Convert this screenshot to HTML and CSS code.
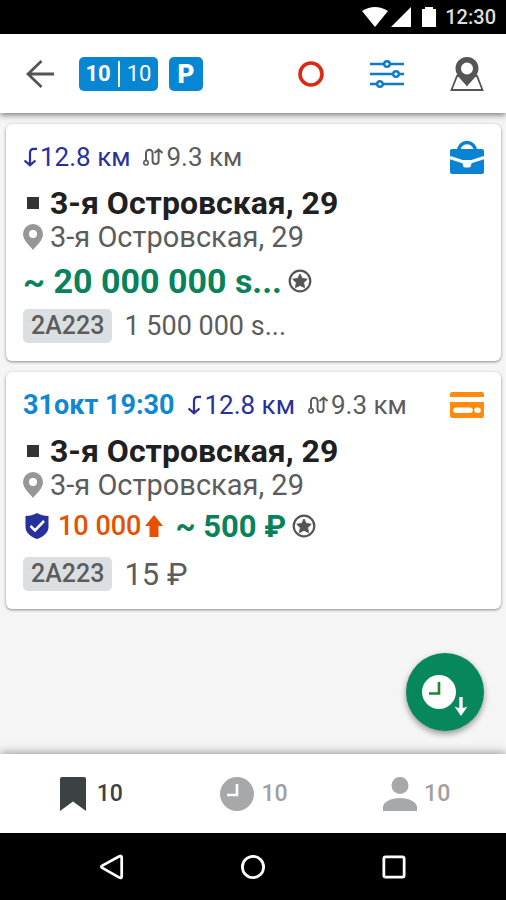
FILE: index.html
```html
<!DOCTYPE html>
<html lang="ru">
<head>
<meta charset="utf-8">
<meta name="viewport" content="width=device-width, initial-scale=1">
<title>Заказы</title>
<link rel="stylesheet" href="styles.css">
</head>
<body>
<svg class="sprite" aria-hidden="true">
  <symbol id="turn" viewBox="0 0 14 20"><path d="M14 1.800H11Q7 1.800 7 6V18M1.500 13.500 7 18.200 12.500 13.500" fill="none" stroke="currentColor" stroke-width="2.200"/></symbol>
  <symbol id="route" viewBox="0 0 20 18"><path d="M3 12.500V5a3.300 3.300 0 0 1 6.600 0V13a3 3 0 0 0 6 0V2M11.500 5 15.600 1.500 19.500 5" fill="none" stroke="currentColor" stroke-width="2"/><circle cx="3" cy="14.800" r="2.200" fill="#fff" stroke="currentColor" stroke-width="1.600"/></symbol>
  <symbol id="pin" viewBox="0 0 20 26"><path fill="currentColor" fill-rule="evenodd" d="M10 0a10 10 0 0 1 10 10c0 6-6 11-10 16C6 21 0 16 0 10A10 10 0 0 1 10 0Zm0 6a4 4 0 1 0 0 8 4 4 0 0 0 0-8Z"/></symbol>
  <symbol id="star" viewBox="0 0 24 24"><circle cx="12" cy="12" r="10.300" fill="none" stroke="currentColor" stroke-width="2.200"/><path fill="currentColor" stroke="currentColor" stroke-linejoin="round" d="m12 5 2.200 4.500 5 .7-3.600 3.500.9 4.900-4.500-2.300-4.500 2.300.9-4.900-3.600-3.500 5-.7Z"/></symbol>
</svg>
<div class="app">
  <div class="status">
    <svg width="26" height="20" viewBox="0 0 26 20" aria-hidden="true"><path fill="#fff" d="M0 4Q13-4 26 4L13 20Z"/></svg>
    <svg class="signal" width="20" height="20" viewBox="0 0 20 20" aria-hidden="true"><path fill="#fff" d="M20 0V20H0Z"/></svg>
    <svg class="battery" width="14" height="20" viewBox="0 0 14 20" aria-hidden="true"><path fill="#fff" d="M3 0h8v2h3v18H0V2h3Z"/></svg>
    <span class="time">12:30</span>
  </div>

  <header class="toolbar">
    <button class="icon-btn" aria-label="Назад"><svg width="28" height="28" viewBox="0 0 28 28"><path d="M28 14H2M15.500 1 2 14l13.500 13" fill="none" stroke="#555" stroke-width="2.800"/></svg></button>
    <button class="badge counts"><b>10</b><span class="bar"></span><span>10</span></button>
    <button class="badge park">P</button>
    <div class="tools">
      <button class="icon-btn" aria-label="Статус"><svg width="26" height="26" viewBox="0 0 26 26"><circle cx="13" cy="13" r="11" fill="none" stroke="#d92a12" stroke-width="3.600"/></svg></button>
      <button class="icon-btn" aria-label="Фильтры"><svg width="34" height="28" viewBox="0 0 34 28"><g fill="#fff" stroke="#1279c8" stroke-width="2.400"><path d="M0 4H34M0 14H34M0 24H34"/><circle cx="17" cy="4" r="2.800"/><circle cx="26" cy="14" r="2.800"/><circle cx="10" cy="24" r="2.800"/></g></svg></button>
      <button class="icon-btn" aria-label="Карта"><svg width="34" height="34" viewBox="0 0 34 34"><path d="M9 19H7L1.500 33H32.500L27 19H25" fill="none" stroke="#555" stroke-width="1.800"/><path fill="#555" fill-rule="evenodd" d="M17 0a11.500 11.500 0 0 1 11.500 11.500c0 7-7 12-11.500 18C12.500 23.500 5.500 18.500 5.500 11.500A11.500 11.500 0 0 1 17 0Zm0 5.500a6 6 0 1 0 0 12 6 6 0 0 0 0-12Z"/></svg></button>
    </div>
  </header>

  <main class="orders">
    <article class="card">
      <div class="row meta">
        <span class="dist near"><svg width="14" height="20"><use href="#turn"/></svg>12.8 км</span>
        <span class="dist"><svg width="20" height="18"><use href="#route"/></svg>9.3 км</span>
        <svg class="kind" width="34" height="34" viewBox="0 0 34 34" aria-hidden="true"><path d="M8.500 11a8.500 8.500 0 0 1 17 0" fill="none" stroke="#0a84d2" stroke-width="3.400"/><rect y="9" width="34" height="25" rx="2" fill="#0a84d2"/><path d="M0 17.500 12 21.500H22L34 17.500" fill="none" stroke="#fff" stroke-width="3.200"/><path fill="#fff" d="M11 20H23L21 25Q21 27.500 19 27.500H15Q13 27.500 13 25Z"/></svg>
      </div>
      <h2 class="row from"><span class="mark"></span>3-я Островская, 29</h2>
      <div class="row to"><svg width="20" height="26"><use href="#pin"/></svg>3-я Островская, 29</div>
      <div class="row pay"><strong class="sum">~ 20 000 000 s...</strong><svg class="star" width="24" height="24"><use href="#star"/></svg></div>
      <div class="row foot"><span class="code">2A223</span><span class="fee">1 500 000 s...</span></div>
    </article>

    <article class="card">
      <div class="row meta">
        <time class="when">31окт 19:30</time>
        <span class="dist near"><svg width="14" height="20"><use href="#turn"/></svg>12.8 км</span>
        <span class="dist"><svg width="20" height="18"><use href="#route"/></svg>9.3 км</span>
        <svg class="kind" width="34" height="26" viewBox="0 0 34 26" aria-hidden="true"><path fill="#ff8a0c" fill-rule="evenodd" d="M2 0H32a2 2 0 0 1 2 2V5H0V2A2 2 0 0 1 2 0ZM0 10H34V24a2 2 0 0 1-2 2H2a2 2 0 0 1-2-2ZM6 15.500a2.500 2.500 0 0 0 0 5.500H20a2.500 2.500 0 0 0 0-5.500ZM27 15.500a2.500 2.500 0 0 0 0 5.500h1a2.500 2.500 0 0 0 0-5.500Z"/></svg>
      </div>
      <h2 class="row from"><span class="mark"></span>3-я Островская, 29</h2>
      <div class="row to"><svg width="20" height="26"><use href="#pin"/></svg>3-я Островская, 29</div>
      <div class="row pay compact">
        <svg class="shield" width="24" height="26" viewBox="0 0 24 26" aria-hidden="true"><path fill="#27309b" d="M12 0q5 3 11.500 3V14c0 6-6 10-11.500 12C6.500 24 .5 20 .5 14V3Q7 3 12 0Z"/><path d="m5.500 13 4.500 4.500L19 8" fill="none" stroke="#fff" stroke-width="2.600"/></svg>
        <span class="bonus">10 000</span>
        <svg class="up" width="18" height="22" viewBox="0 0 18 22" aria-hidden="true"><path fill="#e65100" d="m9 0 9 11h-4.500v11h-9V11H0Z"/></svg>
        <strong class="sum small">~ 500 ₽</strong><svg class="star" width="24" height="24"><use href="#star"/></svg>
      </div>
      <div class="row foot"><span class="code">2A223</span><span class="fee large">15 ₽</span></div>
    </article>

    <button class="fab" aria-label="Предварительные заказы"><svg width="46" height="48" viewBox="0 0 46 48"><circle cx="17" cy="24" r="17" fill="#fff"/><path d="M17 14V25.500H7" fill="none" stroke="#1b8733" stroke-width="2.600"/><path d="M39 29V41" stroke="#fff" stroke-width="3.400"/><path fill="#fff" d="M39 48 32.500 38.500Q39 41.500 45.500 38.500Z"/></svg></button>
  </main>

  <nav class="tabs">
    <a class="tab active" href="#orders"><svg width="26" height="34" viewBox="0 0 26 34"><path fill="#3c4144" d="M2 0H24a2 2 0 0 1 2 2V34L13 24.500 0 34V2A2 2 0 0 1 2 0Z"/></svg>10</a>
    <a class="tab" href="#planned"><svg width="34" height="34" viewBox="0 0 34 34"><circle cx="17" cy="17" r="17" fill="#a6a8a9"/><path d="M17 7V18H7" fill="none" stroke="#fff" stroke-width="2.600"/></svg>10</a>
    <a class="tab" href="#people"><svg width="34" height="34" viewBox="0 0 34 34"><path fill="#a6a8a9" d="M17 0a8.200 8.200 0 0 1 0 17 8.200 8.200 0 0 1 0-17ZM0 34v-4c0-5 8-9 17-9s17 4 17 9v4Z"/></svg>10</a>
  </nav>

  <div class="system">
    <button class="icon-btn" aria-label="Назад"><svg width="24" height="26" viewBox="0 0 26 28"><path d="M2.500 12.500 21 2.300q2.500-1 2.500 1.500V24q0 2.700-2.500 1.500L2.500 15q-2-1.200 0-2.500Z" fill="none" stroke="#fff" stroke-width="3"/></svg></button>
    <button class="icon-btn" aria-label="Домой"><svg width="24" height="24" viewBox="0 0 26 26"><circle cx="13" cy="13" r="11.500" fill="none" stroke="#fff" stroke-width="3"/></svg></button>
    <button class="icon-btn" aria-label="Недавние"><svg width="24" height="24" viewBox="0 0 26 26"><rect x="2" y="2" width="22" height="22" rx="2" fill="none" stroke="#fff" stroke-width="3"/></svg></button>
  </div>
</div>
</body>
</html>
```
FILE: styles.css
```css
* { box-sizing: border-box; }

body {
  margin: 0;
  font-family: Roboto, "Liberation Sans", sans-serif;
  color: #5c5c5c;
}

button {
  border: 0;
  padding: 0;
  margin: 0;
  background: none;
  font: inherit;
}

svg { display: block; flex: none; }
.sprite { position: absolute; width: 0; height: 0; }

.app {
  display: flex;
  flex-direction: column;
  min-height: 100vh;
  background: #f5f5f5;
}

.status {
  display: flex;
  align-items: center;
  justify-content: flex-end;
  height: 34px;
  padding-right: 10px;
  background: #000;
}
.signal { margin-left: 3px; }
.battery { margin-left: 11px; }
.time {
  margin-left: 9px;
  font-size: 20px;
  font-weight: 500;
  color: #ddd;
}

.toolbar {
  position: relative;
  display: flex;
  align-items: center;
  height: 79px;
  padding: 0 22px 0 26px;
  background: #fff;
  box-shadow: 0 2px 6px rgba(0, 0, 0, 0.5);
}
.badge {
  display: flex;
  align-items: center;
  justify-content: center;
  height: 34px;
  border-radius: 5px;
  background: #0786d3;
  color: #fff;
}
.counts {
  gap: 7px;
  width: 79px;
  margin-left: 25px;
  font-size: 22px;
}
.bar { width: 2px; height: 26px; background: #fff; }
.park {
  width: 34px;
  margin-left: 11px;
  font-size: 26px;
  font-weight: 900;
}
.tools {
  display: flex;
  align-items: center;
  gap: 46px;
  margin-left: auto;
}

.orders {
  position: relative;
  flex: 1;
  display: flex;
  flex-direction: column;
  gap: 11px;
  padding: 11px 5px 0 6px;
}
.card {
  padding: 16px 17px 18px;
  border-radius: 6px;
  background: #fff;
  box-shadow: 0 1px 3px rgba(0, 0, 0, 0.45);
}
.row {
  display: flex;
  align-items: center;
  white-space: nowrap;
}
.meta {
  gap: 13px;
  height: 34px;
  font-size: 26px;
}
.dist { display: flex; align-items: center; gap: 3px; }
.near { color: #27309b; }
.when { font-size: 27px; font-weight: 700; color: #0f87d3; }
.kind { margin-left: auto; }

.from {
  height: 36px;
  margin: 11px 0 0;
  font-size: 32px;
  font-weight: 700;
  color: #1e2022;
}
.mark {
  width: 12px;
  height: 12px;
  margin: 0 11px 0 4px;
  background: #333;
}
.to {
  gap: 7px;
  height: 32px;
  font-size: 29px;
}
.to svg { color: #969696; }
.pay { height: 36px; margin-top: 10px; }
.compact { height: 30px; margin-bottom: 16px; }
.sum { font-size: 34px; font-weight: 700; color: #07825a; }
.small { margin-left: 12px; font-size: 31px; }
.star { margin-left: 6px; color: #555; }
.shield { margin: 0 9px 0 2px; }
.bonus { font-size: 27px; font-weight: 500; color: #e65100; }
.up { margin-left: 4px; }

.foot { gap: 12px; height: 34px; margin-top: 10px; }
.compact + .foot { margin-top: 0; }
.code {
  padding: 0 8px;
  border-radius: 5px;
  background: #dcdfe2;
  font-size: 25px;
  font-weight: 500;
  line-height: 34px;
}
.fee { font-size: 27px; }
.large { font-size: 31px; }

.fab {
  position: absolute;
  right: 22px;
  bottom: 23px;
  display: flex;
  align-items: center;
  justify-content: center;
  width: 78px;
  height: 78px;
  border-radius: 50%;
  background: #07875c;
  box-shadow: 0 3px 6px rgba(0, 0, 0, 0.4);
}

.tabs {
  position: relative;
  display: grid;
  grid-template-columns: 1fr 1fr 1fr;
  height: 79px;
  padding: 0 8px 0 10px;
  background: #fff;
  box-shadow: 0 -1px 9px rgba(0, 0, 0, 0.4);
}
.tab {
  display: flex;
  align-items: center;
  justify-content: center;
  gap: 7px;
  font-size: 23px;
  font-weight: 500;
  color: #a0a0a0;
  text-decoration: none;
}
.active { color: #3c4144; gap: 11px; }

.system {
  display: flex;
  align-items: center;
  justify-content: center;
  gap: 117px;
  height: 67px;
  background: #000;
}
```
